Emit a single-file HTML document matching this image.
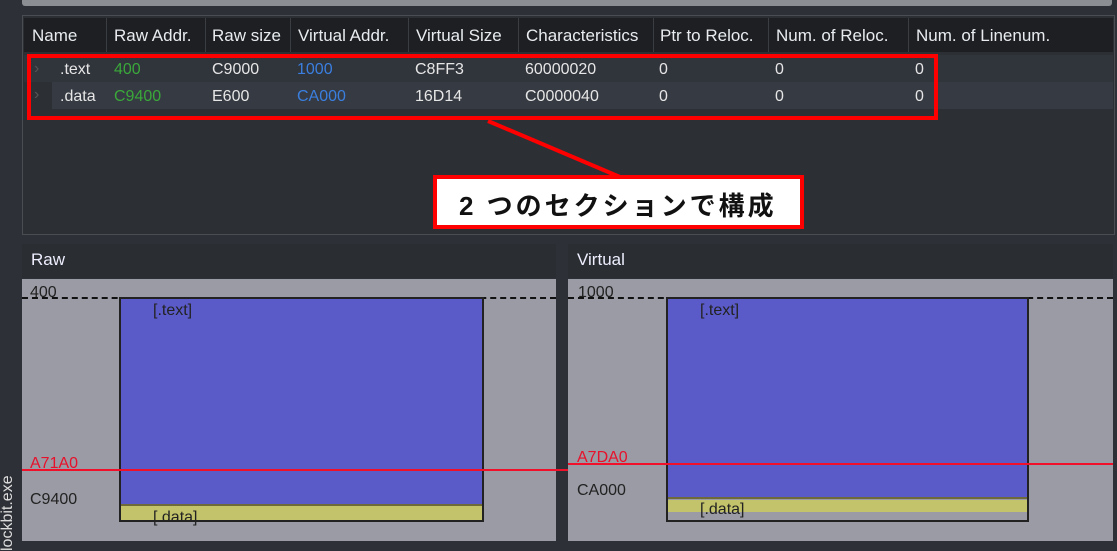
<!DOCTYPE html>
<html><head><meta charset="utf-8"><style>
*{margin:0;padding:0;box-sizing:border-box}
body{width:1117px;height:550px;background:#2d3036;position:relative;overflow:hidden;font-family:"Liberation Sans","Noto Sans CJK JP",sans-serif}
.a{position:absolute}
.hd{color:#e8ecf0;font-size:17px;top:26px}
.sep{position:absolute;top:18px;width:1px;height:34px;background:#3a3d42}
.c{font-size:16px;color:#e6e6e6;position:absolute}
.g{color:#3aa83a}.b{color:#3a7fe0}
.lbl{font-size:16px;color:#222;position:absolute}
.r{color:#e8102a}
</style></head><body>
<div class="a" style="left:22px;top:0;width:1090px;height:6px;background:#8b8e93;border-radius:0 0 3px 3px"></div>
<div class="a" style="left:22px;top:15px;width:1093px;height:220px;background:#2c2f34;border:1px solid #4a4d52"></div>
<div class="a" style="left:24px;top:18px;width:1089px;height:34px;background:#1e1f22"></div>
<div class="sep" style="left:106px"></div><div class="sep" style="left:205px"></div><div class="sep" style="left:290px"></div><div class="sep" style="left:408px"></div><div class="sep" style="left:518px"></div><div class="sep" style="left:653px"></div><div class="sep" style="left:768px"></div><div class="sep" style="left:908px"></div>
<div class="a hd" style="left:32px">Name</div>
<div class="a hd" style="left:114px">Raw Addr.</div>
<div class="a hd" style="left:212px">Raw size</div>
<div class="a hd" style="left:298px">Virtual Addr.</div>
<div class="a hd" style="left:416px">Virtual Size</div>
<div class="a hd" style="left:526px">Characteristics</div>
<div class="a hd" style="left:660px">Ptr to Reloc.</div>
<div class="a hd" style="left:776px">Num. of Reloc.</div>
<div class="a hd" style="left:916px">Num. of Linenum.</div>
<div class="a" style="left:24px;top:55px;width:1089px;height:27px;background:#30343b"></div>
<div class="a" style="left:52px;top:82px;width:1061px;height:27px;background:#363a42"></div>
<div class="c" style="left:34px;top:60px;color:#555">›</div><div class="c" style="left:34px;top:86px;color:#555">›</div>
<div class="c" style="left:60px;top:61px">.text</div><div class="c g" style="left:114px;top:61px">400</div><div class="c" style="left:212px;top:61px">C9000</div><div class="c b" style="left:297px;top:61px">1000</div><div class="c" style="left:415px;top:61px">C8FF3</div><div class="c" style="left:525px;top:61px">60000020</div><div class="c" style="left:659px;top:61px">0</div><div class="c" style="left:775px;top:61px">0</div><div class="c" style="left:915px;top:61px">0</div>
<div class="c" style="left:60px;top:88px">.data</div><div class="c g" style="left:114px;top:88px">C9400</div><div class="c" style="left:212px;top:88px">E600</div><div class="c b" style="left:297px;top:88px">CA000</div><div class="c" style="left:415px;top:88px">16D14</div><div class="c" style="left:525px;top:88px">C0000040</div><div class="c" style="left:659px;top:88px">0</div><div class="c" style="left:775px;top:88px">0</div><div class="c" style="left:915px;top:88px">0</div>
<div class="a" style="left:27px;top:54px;width:911px;height:66px;border:4px solid #f00"></div>
<svg class="a" style="left:0;top:0" width="1117" height="550"><line x1="488" y1="121" x2="620" y2="177" stroke="#f00" stroke-width="4"/></svg>
<div class="a" style="left:433px;top:175px;width:371px;height:54px;background:#fff;border:4px solid #f00;font-weight:bold;font-size:26px;color:#111;letter-spacing:3px;padding:7px 0 0 22px">2 つのセクションで構成</div>
<div class="a" style="left:22px;top:244px;width:534px;height:34px;background:#2a2d31;color:#eef;font-size:17px;padding:6px 0 0 9px">Raw</div>
<div class="a" style="left:568px;top:244px;width:545px;height:34px;background:#2a2d31;color:#eef;font-size:17px;padding:6px 0 0 9px">Virtual</div>
<div class="a" style="left:22px;top:279px;width:534px;height:262px;background:#9a9ba4"></div>
<div class="a" style="left:568px;top:279px;width:545px;height:262px;background:#9a9ba4"></div>
<div class="a" style="left:22px;top:297px;width:534px;border-top:2px dashed #111"></div>
<div class="a" style="left:119px;top:297px;width:365px;height:225px;background:#c2c36a;border:2px solid #222"></div>
<div class="a" style="left:121px;top:299px;width:361px;height:207px;background:#5a5bc8;border-bottom:2px solid #6f6a3a"></div>
<div class="lbl" style="left:153px;top:302px">[.text]</div>
<div class="lbl" style="left:153px;top:509px">[.data]</div>
<div class="lbl" style="left:30px;top:284px">400</div>
<div class="lbl r" style="left:30px;top:455px">A71A0</div>
<div class="lbl" style="left:30px;top:491px">C9400</div>
<div class="a" style="left:22px;top:469px;width:546px;height:2px;background:#f0102a"></div>
<div class="a" style="left:568px;top:297px;width:545px;border-top:2px dashed #111"></div>
<div class="a" style="left:666px;top:297px;width:363px;height:225px;background:#9a9ba4;border:2px solid #222"></div>
<div class="a" style="left:668px;top:299px;width:359px;height:200px;background:#5a5bc8;border-bottom:2px solid #6f6a3a"></div>
<div class="a" style="left:668px;top:500px;width:359px;height:12px;background:#c2c36a"></div>
<div class="lbl" style="left:700px;top:302px">[.text]</div>
<div class="lbl" style="left:700px;top:501px">[.data]</div>
<div class="lbl" style="left:578px;top:284px">1000</div>
<div class="lbl r" style="left:577px;top:449px">A7DA0</div>
<div class="lbl" style="left:577px;top:482px">CA000</div>
<div class="a" style="left:568px;top:463px;width:545px;height:2px;background:#f0102a"></div>
<div class="a" style="left:-42px;top:492px;width:100px;transform:rotate(-90deg);color:#ddd;font-size:16px">lockbit.exe</div>
</body></html>
